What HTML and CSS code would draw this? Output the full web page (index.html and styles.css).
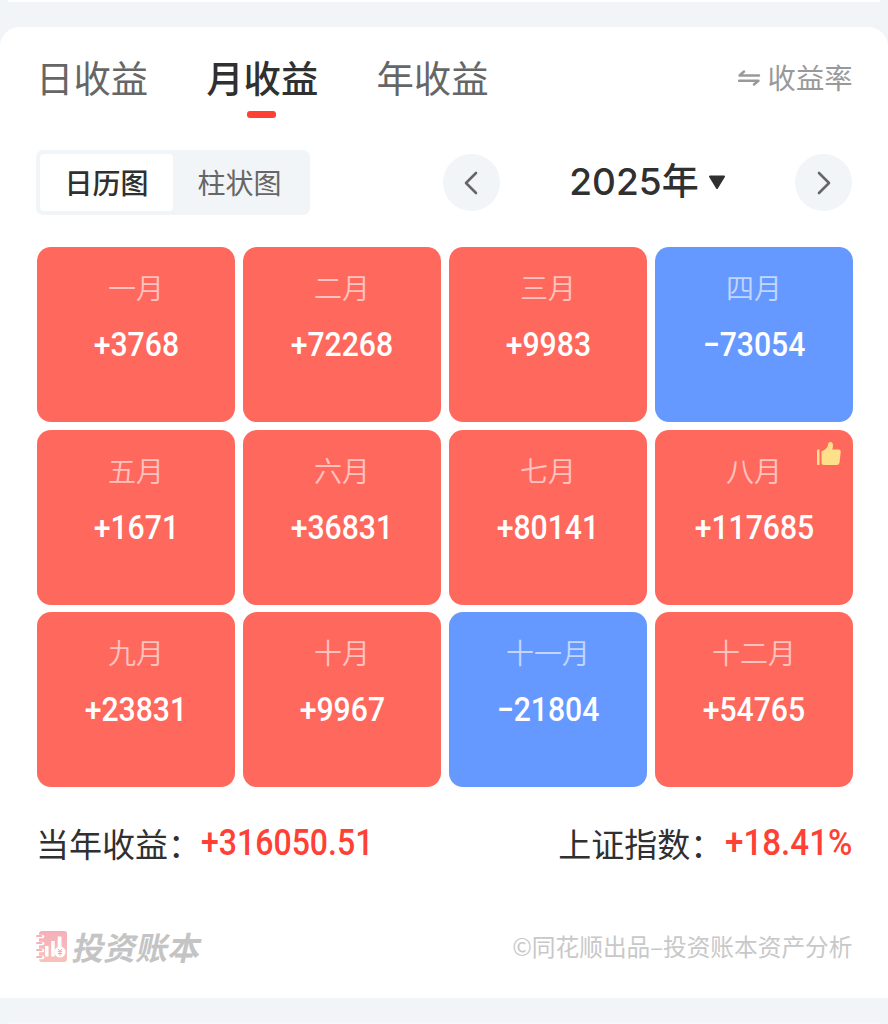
FILE: index.html
```html
<!DOCTYPE html>
<html lang="zh-CN">
<head>
  <meta charset="UTF-8">
  <meta name="viewport" content="width=device-width, initial-scale=1.0">
  <title>月收益</title>
  <link rel="stylesheet" href="styles.css">
</head>
<body>
  <div class="prev-card"></div>
  <main class="card">
    <nav class="tabs">
      <a class="tab">日收益</a>
      <a class="tab active">月收益</a>
      <a class="tab">年收益</a>
      <a class="rate">
        <svg width="23" height="18" viewBox="0 0 23 18" fill="none" stroke="#999" stroke-width="2.4" stroke-linecap="round" stroke-linejoin="round">
          <path d="M21 7.500H1.500L6 3.500M1 12.800H20.500L16 16.500"/>
        </svg>
        <span>收益率</span>
      </a>
    </nav>

    <div class="toolbar">
      <div class="switch">
        <span class="switch-item on">日历图</span>
        <span class="switch-item">柱状图</span>
      </div>
      <div class="year-picker">
        <button class="arrow">
          <svg width="14" height="24" viewBox="0 0 14 24"><path d="M12 2L2 12L12 22"/></svg>
        </button>
        <div class="year">
          <span>2025年</span>
          <svg width="18" height="15" viewBox="0 0 18 15"><path d="M2 1.500H16L9 13Z" fill="#303030" stroke="#303030" stroke-width="2" stroke-linejoin="round"/></svg>
        </div>
        <button class="arrow">
          <svg width="14" height="24" viewBox="0 0 14 24"><path d="M2 2L12 12L2 22"/></svg>
        </button>
      </div>
    </div>

    <section class="months">
      <div class="month"><span class="name">一月</span><span class="num">+3768</span></div>
      <div class="month"><span class="name">二月</span><span class="num">+72268</span></div>
      <div class="month"><span class="name">三月</span><span class="num">+9983</span></div>
      <div class="month loss"><span class="name">四月</span><span class="num">−73054</span></div>
      <div class="month"><span class="name">五月</span><span class="num">+1671</span></div>
      <div class="month"><span class="name">六月</span><span class="num">+36831</span></div>
      <div class="month"><span class="name">七月</span><span class="num">+80141</span></div>
      <div class="month">
        <svg class="best" width="24" height="24" viewBox="0 0 24 24" fill="#ffe08a">
          <path d="M0 8.500Q0 7.500 1 7.500H2.500V23H1Q0 23 0 22Z"/>
          <path d="M4.500 9.500L8.500 7.300Q11 5.500 11 2.500Q11 0 13.300 0Q16 0.200 16 3.500Q16 5.500 15.200 7.500H21.500Q24 7.500 23.700 10L22.500 20.500Q22.200 23 19.700 23H7Q4.500 23 4.500 20.500Z"/>
        </svg>
        <span class="name">八月</span><span class="num">+117685</span>
      </div>
      <div class="month"><span class="name">九月</span><span class="num">+23831</span></div>
      <div class="month"><span class="name">十月</span><span class="num">+9967</span></div>
      <div class="month loss"><span class="name">十一月</span><span class="num">−21804</span></div>
      <div class="month"><span class="name">十二月</span><span class="num">+54765</span></div>
    </section>

    <div class="summary">
      <div class="total"><span>当年收益：</span><span class="num">+316050.51</span></div>
      <div class="total index"><span>上证指数：</span><span class="num">+18.41%</span></div>
    </div>

    <footer class="footer">
      <div class="brand">
        <svg width="31" height="31" viewBox="0 0 31 31">
          <defs>
            <linearGradient id="book" x1="0" y1="0" x2="0" y2="1">
              <stop offset="0" stop-color="#f4afba"/>
              <stop offset="1" stop-color="#f8c2b9"/>
            </linearGradient>
          </defs>
          <rect x="3" y="0" width="28" height="31" rx="3" fill="url(#book)"/>
          <path d="M2 5.500H6.500M2 12.500H6.500M2 19.500H6.500M2 26.500H6.500" stroke="#fff" stroke-width="3.600" stroke-linecap="round"/>
          <path d="M1 5H5.500M1 12H5.500M1 19H5.500M1 26H5.500" stroke="#f5b4ba" stroke-width="2" stroke-linecap="round"/>
          <path d="M9 15H12.500V25.500H9ZM15.200 10H18.700V25.500H15.200ZM21.700 5.500H25.500V17H21.700Z" fill="#fff"/>
          <circle cx="24" cy="21" r="5.600" fill="#fff"/>
          <path d="M22.200 18L24 20.300L25.800 18M21.800 20.600H26.200M21.800 22.500H26.200M24 20.300V24.500" stroke="#f5a9ad" stroke-width="1" fill="none"/>
        </svg>
        <span class="brand-name">投资账本</span>
      </div>
      <div class="copy">©同花顺出品–投资账本资产分析</div>
    </footer>
  </main>
  <div class="next-card"></div>
</body>
</html>
```
FILE: styles.css
```css
:root {
  --bg: #f1f5f7;
  --text: #303030;
  --text-2: #666;
  --text-3: #999;
  --red: #ff4035;
  --gain: #ff685d;
  --loss: #6699ff;
}
* {
  box-sizing: border-box;
}
body {
  margin: 0;
  height: 1024px;
  overflow: hidden;
  background: var(--bg);
  color: var(--text);
  font-family: 'Noto Sans CJK SC', sans-serif;
  display: flex;
  flex-direction: column;
}
.prev-card {
  height: 2px;
  margin: 0 8px;
  background: #fff;
  border-radius: 0 0 4px 4px;
}
.next-card {
  height: 2px;
  margin: 24px 8px 0;
  background: #f7f7f9;
}
.card {
  height: 971px;
  margin-top: 25px;
  padding: 0 35.5px 0 36px;
  background: #fff;
  border-radius: 20px 20px 0 0;
}
.tabs {
  height: 100px;
  display: flex;
  align-items: center;
  gap: 58px;
}
.tab {
  position: relative;
  font-size: 37.4px;
  line-height: 54px;
  color: var(--text-2);
  font-weight: 400;
}
.tab.active {
  color: var(--text);
  font-weight: 500;
}
.tab.active::after {
  content: '';
  position: absolute;
  left: 41px;
  top: 61px;
  width: 29px;
  height: 7px;
  border-radius: 3px;
  background: var(--red);
}
.rate {
  margin-left: auto;
  display: flex;
  align-items: center;
  gap: 7px;
  font-size: 28.3px;
  line-height: 40px;
  font-weight: 400;
  color: var(--text-3);
}
.toolbar {
  margin-top: 23px;
  height: 65px;
  display: flex;
  align-items: center;
  justify-content: space-between;
}
.switch {
  width: 274px;
  height: 65px;
  padding: 4px;
  display: flex;
  background: var(--bg);
  border-radius: 7px;
}
.switch-item {
  flex: 1;
  height: 57px;
  line-height: 57px;
  text-align: center;
  font-size: 28px;
  font-weight: 400;
  color: var(--text-2);
  border-radius: 4px;
}
.switch-item.on {
  background: #fff;
  color: var(--text);
  font-weight: 500;
}
.year-picker {
  width: 410px;
  display: flex;
  align-items: center;
  justify-content: space-between;
}
.arrow {
  width: 57px;
  height: 57px;
  padding: 0;
  border: none;
  border-radius: 50%;
  background: var(--bg);
  display: flex;
  align-items: center;
  justify-content: center;
}
.arrow path {
  fill: none;
  stroke: #666;
  stroke-width: 2.6;
  stroke-linecap: round;
  stroke-linejoin: round;
}
.year {
  display: flex;
  align-items: center;
  gap: 9px;
  font-family: Inter, 'Noto Sans CJK SC', sans-serif;
  font-size: 37px;
  font-weight: 500;
  line-height: 54px;
}
.year span {
  margin-top: -1px;
}
.months {
  margin: 32px -0.5px 0 1px;
  display: grid;
  grid-template-columns: repeat(4, 198px);
  justify-content: space-between;
  grid-auto-rows: 175px;
  row-gap: 7.5px;
}
.month {
  position: relative;
  display: flex;
  flex-direction: column;
  align-items: center;
  padding-top: 20px;
  background: var(--gain);
  border-radius: 14px;
  color: #fff;
}
.month.loss {
  background: var(--loss);
}
.name {
  font-size: 28px;
  line-height: 40px;
  font-weight: 350;
  opacity: 0.6;
}
.num {
  font-family: Roboto, sans-serif;
  font-weight: 500;
}
.month .num {
  margin-top: 18px;
  font-size: 33.5px;
  line-height: 40px;
  transform: scaleX(0.9);
}
.best {
  position: absolute;
  top: 12px;
  right: 12px;
}
.summary {
  margin-top: 32px;
  display: flex;
  justify-content: space-between;
}
.total {
  display: flex;
  align-items: center;
  font-size: 33px;
  line-height: 48px;
  font-weight: 400;
}
.total .num {
  font-size: 36px;
  color: var(--red);
  transform: scaleX(0.89);
  transform-origin: left;
}
.total.index .num {
  margin-left: -9px;
  transform: scaleX(0.92);
  transform-origin: right;
}
.footer {
  margin-top: 57px;
  display: flex;
  align-items: center;
  justify-content: space-between;
}
.brand {
  display: flex;
  align-items: center;
  gap: 7px;
}
.brand-name {
  font-size: 32px;
  line-height: 44px;
  font-weight: 700;
  color: #c4c4c4;
  transform: skewX(-12deg);
}
.copy {
  font-size: 23.7px;
  line-height: 34px;
  font-weight: 400;
  color: #c8c8c8;
}
```
